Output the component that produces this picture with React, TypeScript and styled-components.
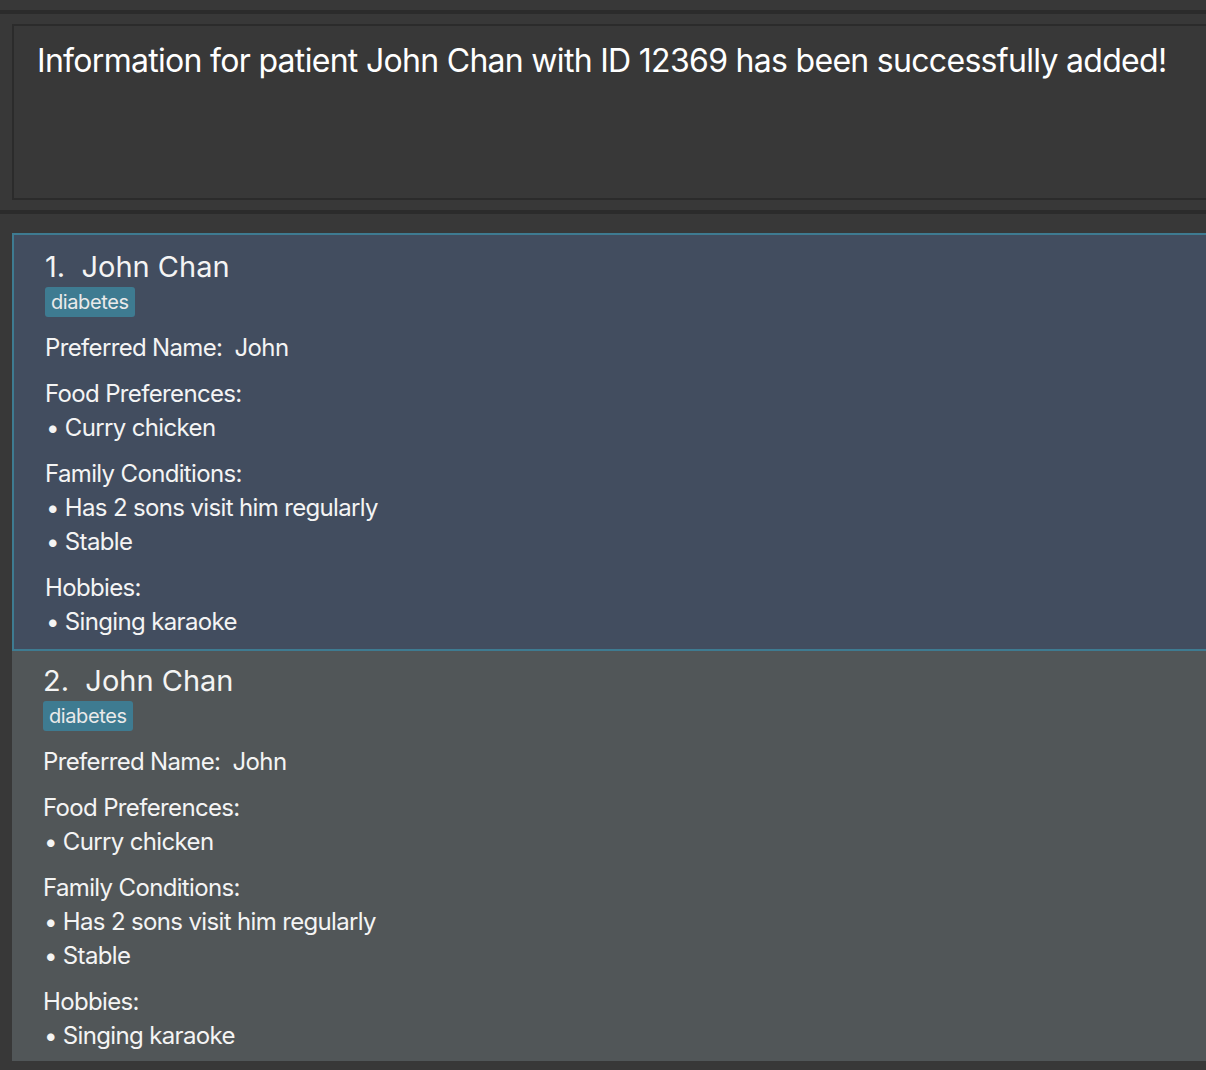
import React from "react";
import styled, { createGlobalStyle } from "styled-components";

const GlobalStyle = createGlobalStyle`
  html, body {
    margin: 0;
    padding: 0;
    background: #383838;
    overflow: hidden;
  }
  body {
    font-family: Inter, "Noto Sans", sans-serif;
    color: #ffffff;
  }
`;

const Window = styled.div`
  width: 1240px;
  min-height: 1070px;
  background: #383838;
  display: flex;
  flex-direction: column;
  & > * {
    flex-shrink: 0;
  }
`;

const Separator = styled.div<{ $top: number }>`
  height: 4px;
  margin-top: ${(p) => p.$top}px;
  background: #2b2b2b;
`;

const ResultArea = styled.div`
  padding: 10px 0 10px 12px;
`;

const ResultBox = styled.div`
  border: 2px solid #2b2b2b;
  border-right: none;
  padding: 15px 0 0 23px;
  box-sizing: border-box;
  height: 176px;
  font-size: 32px;
  letter-spacing: -0.7px;
  color: #ffffff;
`;

const List = styled.div`
  padding: 19px 0 0 12px;
  display: flex;
  flex-direction: column;
`;

const Card = styled.div<{ $selected?: boolean }>`
  background: ${(p) => (p.$selected ? "#424d5f" : "#515658")};
  border: ${(p) => (p.$selected ? "2px solid #3e7b91" : "none")};
  border-right: none;
  padding: ${(p) => (p.$selected ? "14px 0 10px 31px" : "12px 0 8px 31px")};
  display: flex;
  flex-direction: column;
`;

const Name = styled.div`
  font-size: 29px;
  line-height: 36px;
  white-space: pre;
  color: #f4f4f4;
`;

const Tags = styled.div`
  display: flex;
  gap: 6px;
  margin: 2px 0 2px 0;
`;

const Tag = styled.span`
  background: #3e7b91;
  color: #eaeaea;
  font-size: 20px;
  line-height: 30px;
  padding: 0 6px;
  border-radius: 3px;
  letter-spacing: -0.4px;
`;

const Section = styled.div`
  display: flex;
  flex-direction: column;
  margin-top: 12px;
  &:first-of-type {
    margin-top: 0;
  }
`;

const Line = styled.div`
  font-size: 24px;
  line-height: 34px;
  white-space: pre;
  color: #f4f4f4;
  letter-spacing: -0.65px;
`;

const Bullet = styled(Line)`
  padding-left: 1px;
  &::before {
    content: "•";
    margin-right: 6px;
  }
`;

type Patient = {
  name: string;
  tags: string[];
  preferred: string;
  food: string[];
  family: string[];
  hobbies: string[];
};

const patients: Patient[] = [
  {
    name: "John Chan",
    tags: ["diabetes"],
    preferred: "John",
    food: ["Curry chicken"],
    family: ["Has 2 sons visit him regularly", "Stable"],
    hobbies: ["Singing karaoke"],
  },
  {
    name: "John Chan",
    tags: ["diabetes"],
    preferred: "John",
    food: ["Curry chicken"],
    family: ["Has 2 sons visit him regularly", "Stable"],
    hobbies: ["Singing karaoke"],
  },
];

const PatientCard = ({
  index,
  patient,
  selected,
}: {
  index: number;
  patient: Patient;
  selected?: boolean;
}) => (
  <Card $selected={selected}>
    <Name>{`${index}.  ${patient.name}`}</Name>
    <Tags>
      {patient.tags.map((t) => (
        <Tag key={t}>{t}</Tag>
      ))}
    </Tags>
    <Section>
      <Line>{`Preferred Name:  ${patient.preferred}`}</Line>
    </Section>
    <Section>
      <Line>Food Preferences:</Line>
      {patient.food.map((f) => (
        <Bullet key={f}>{f}</Bullet>
      ))}
    </Section>
    <Section>
      <Line>Family Conditions:</Line>
      {patient.family.map((f) => (
        <Bullet key={f}>{f}</Bullet>
      ))}
    </Section>
    <Section>
      <Line>Hobbies:</Line>
      {patient.hobbies.map((h) => (
        <Bullet key={h}>{h}</Bullet>
      ))}
    </Section>
  </Card>
);

const App = () => {
  return (
    <Window>
      <GlobalStyle />
      <Separator $top={10} />
      <ResultArea>
        <ResultBox>
          Information for patient John Chan with ID 12369 has been successfully added!
        </ResultBox>
      </ResultArea>
      <Separator $top={0} />
      <List>
        {patients.map((p, i) => (
          <PatientCard key={i} index={i + 1} patient={p} selected={i === 0} />
        ))}
      </List>
    </Window>
  );
};

export default App;
